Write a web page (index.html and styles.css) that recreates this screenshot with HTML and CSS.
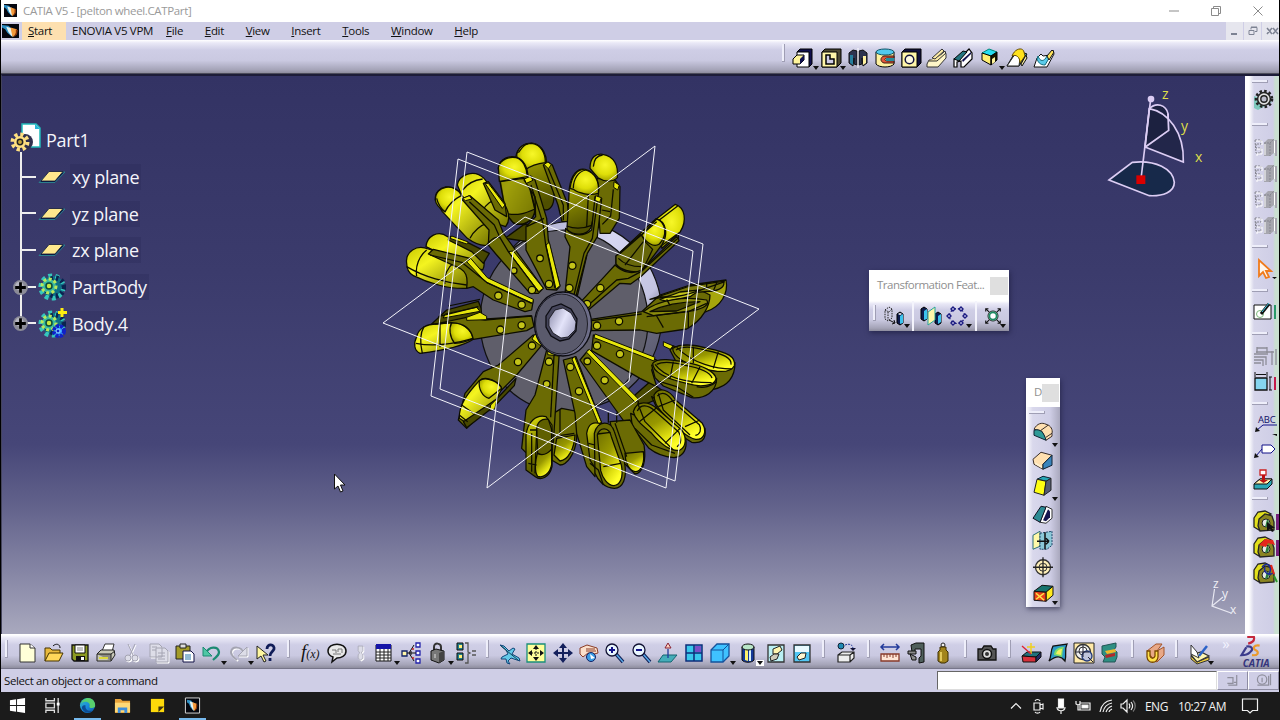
FILE: index.html
```html
<!DOCTYPE html>
<html lang="en">
<head>
<meta charset="UTF-8">
<meta name="viewport" content="width=device-width,initial-scale=1.0">
<title>CATIA V5 - [pelton wheel.CATPart]</title>
<link rel="stylesheet" href="styles.css">
</head>
<body>

<!-- ===== Shared shapes ===== -->
<svg class="defs" width="0" height="0">
  <defs>
    <linearGradient id="gold" x1="0" y1="0" x2="1" y2="1">
      <stop offset="0" stop-color="#c9c900"/><stop offset=".35" stop-color="#f4f420"/><stop offset="1" stop-color="#747400"/>
    </linearGradient>
    <linearGradient id="goldDown" x1="0" y1="0" x2=".2" y2="1">
      <stop offset="0" stop-color="#e4e410"/><stop offset=".45" stop-color="#8b8b00"/><stop offset="1" stop-color="#4f4f00"/>
    </linearGradient>
    <linearGradient id="cup" x1="0" y1="0" x2=".6" y2="1">
      <stop offset="0" stop-color="#6c6c00"/><stop offset=".5" stop-color="#989800"/><stop offset=".8" stop-color="#dede10"/><stop offset="1" stop-color="#ffff28"/>
    </linearGradient>
    <radialGradient id="dome" cx=".55" cy=".4" r=".6">
      <stop offset="0" stop-color="#f7f728"/><stop offset=".6" stop-color="#dede08"/><stop offset="1" stop-color="#a2a200"/>
    </radialGradient>
    <linearGradient id="bore" x1="0" y1="0" x2="1" y2=".5">
      <stop offset="0" stop-color="#8d8dac"/><stop offset=".6" stop-color="#e4e4fa"/><stop offset="1" stop-color="#b5b5d2"/>
    </linearGradient>
    <linearGradient id="rim" x1="0" y1="0" x2="1" y2="1">
      <stop offset="0" stop-color="#9c9cc0"/><stop offset=".4" stop-color="#d6d6f2"/><stop offset=".66" stop-color="#c4c4e2"/><stop offset=".76" stop-color="#66667c"/><stop offset="1" stop-color="#4c4c60"/>
    </linearGradient>
    <linearGradient id="edge" x1="0" y1="0" x2="1" y2="1">
      <stop offset="0" stop-color="#35c1b0"/><stop offset=".5" stop-color="#1a8be0"/><stop offset="1" stop-color="#0c59a4"/>
    </linearGradient>
    <symbol id="catia" viewBox="0 0 16 16" preserveAspectRatio="none">
      <path fill="#05070f" d="M0 0h16v16H0z"/>
      <path fill="#2d8fc4" d="M0 1l6 1 5 5-1 8-5-5-2-4-3-2z"/>
      <path fill="#e8f3ef" d="M4 3l6 2 1 6-2 3-3-5z"/>
      <path fill="#f39a3c" d="M8 4l6 2 0 5-4 4-1-5z"/>
      <path fill="#8a3408" d="M13 6l2 1-1 5-3 3 2-5z"/>
    </symbol>
    <symbol id="gear" viewBox="0 0 22 22">
      <circle cx="11" cy="11" r="8" fill="none" stroke="#222" stroke-width="2.600" stroke-dasharray="2.500 2.200"/>
      <circle cx="11" cy="11" r="6.400" fill="#e2e2e2" stroke="#222" stroke-width="1.500"/>
      <circle cx="11" cy="11" r="3.200" fill="#bdbdcc" stroke="#222" stroke-width="1.400"/>
    </symbol>
    <symbol id="body" viewBox="0 0 28 28">
      <circle cx="15" cy="14" r="11" fill="#0f6f86"/>
      <circle cx="14" cy="14" r="11.400" fill="none" stroke="#35c7bd" stroke-width="4.400" stroke-dasharray="3.800 3.300"/>
      <circle cx="17" cy="14" r="9" fill="none" stroke="#0b2450" stroke-width="5" stroke-dasharray="2.400 3"/>
      <circle cx="11" cy="13" r="7" fill="#37b9a0" stroke="#b9e85a" stroke-width="3" stroke-dasharray="3 2.400"/>
      <circle cx="11" cy="13" r="3" fill="#c5e840" stroke="#0c4b3b" stroke-width="1.500"/>
    </symbol>
    <symbol id="ghost" viewBox="0 0 24 22">
      <path fill="#a6a6ae" d="M11 7l4-4h6v14l-4 3h-6zM22 4h3v16h-3z"/>
      <path fill="none" stroke="#85858f" stroke-dasharray="2 1" d="M2 4h6v4H3v4h5v5H3zM11 7h6v13M17 7l4-4"/>
      <path fill="none" stroke="#fff" d="M3 5h6v4M4 13h5v5H4v2M12 8v11M21.500 5v12"/>
    </symbol>
    <symbol id="nut" viewBox="0 0 24 22">
      <path fill="#e2df1c" stroke="#222" stroke-width="1.300" d="M1 8l4-6 7-1 6 3-8 4-4 12-5-3z"/>
      <path fill="#8a8422" stroke="#222" stroke-width="1.300" d="M6 9l6-5 7 2 2 6v8l-14 1-2-5z"/>
      <circle cx="13" cy="13" r="4" fill="#e5ebe5" stroke="#222"/>
      <path fill="#2b7c3b" d="M14 9.500a4 4 0 0 1-2 7.400z"/>
    </symbol>
    <symbol id="plane" viewBox="0 0 28 14">
      <path fill="#0b1f4a" stroke="#2b7d8d" d="M1 12.500h16L27 2l-16 .5z"/>
      <path fill="#ffe88d" stroke="#0e1538" stroke-width=".8" d="M3 11L11 1.500h14L17 11z"/>
    </symbol>
    <symbol id="plus" viewBox="0 0 16 16">
      <circle cx="8" cy="8" r="7" fill="#8b8b97"/><circle cx="7" cy="6.500" r="4" fill="#b4b4c0"/>
      <path stroke="#000" stroke-width="2.600" d="M8 3v10M3 8h10"/>
    </symbol>
  </defs>
</svg>

<div class="app">

  <!-- ===== Title bar ===== -->
  <header class="titlebar">
    <svg class="logo"><use href="#catia"/></svg>
    <span class="title">CATIA V5 - [pelton wheel.CATPart]</span>
    <div class="win-btns">
      <svg viewBox="0 0 12 12"><path d="M1 6h10"/></svg>
      <svg viewBox="0 0 12 12"><path d="M1.500 3.500h7v7h-7zM3.500 3.500v-2h7v7h-2"/></svg>
      <svg viewBox="0 0 12 12"><path d="M1.500 1.500l9 9M10.500 1.500l-9 9"/></svg>
    </div>
  </header>

  <!-- ===== Menu ===== -->
  <nav class="menubar">
    <svg class="logo"><use href="#catia"/></svg>
    <span class="item start"><u>S</u>tart</span>
    <span class="item enovia">ENOVIA V5 VPM</span>
    <span class="item"><u>F</u>ile</span>
    <span class="item"><u>E</u>dit</span>
    <span class="item"><u>V</u>iew</span>
    <span class="item"><u>I</u>nsert</span>
    <span class="item"><u>T</u>ools</span>
    <span class="item"><u>W</u>indow</span>
    <span class="item"><u>H</u>elp</span>
    <div class="mdi">
      <svg viewBox="0 0 17 18"><path stroke-width="2" d="M5 12h6"/></svg>
      <svg viewBox="0 0 17 18"><path d="M5 8.500h5v4H5zM7 7.500v-2h6v4h-2M7 5h6"/></svg>
      <svg viewBox="0 0 17 18"><path stroke-width="1.500" d="M5 6l5 6M10 6l-5 6M11 6l5 6M16 6l-5 6"/></svg>
    </div>
  </nav>

  <!-- ===== Sketch based features ===== -->
  <div class="toolbar top">
    <i class="grip"></i>
    <svg class="tool" viewBox="0 0 22 22"><path fill="#10104e" stroke="#000" d="M5 5l3-3h12v15l-3 3z"/><path fill="#fff" stroke="#000" d="M5 5h12v15H5z"/><path fill="#fff59c" stroke="#000" d="M1 12l4-4h7v5l-4 4H1z"/><path fill="#10104e" d="M8 12l4-4v5l-4 4z"/></svg><b class="drop"></b>
    <svg class="tool" viewBox="0 0 22 22"><path fill="#4d4933" stroke="#000" d="M2 5l3-3h16v14l-4 4H2z"/><path fill="#fff6a8" stroke="#000" d="M2 5h15v15H2z"/><path fill="#cfcde6" stroke="#000" stroke-width="1.500" d="M6 8h4v4h4v5H6z"/></svg><b class="drop"></b>
    <svg class="tool" viewBox="0 0 22 22"><path fill="#2d344f" stroke="#111" d="M2 6l4-3 4 1v14l-3-1v-6l-1 8-4-3z"/><path fill="#277f9c" d="M3 8h3v10l-3-2z"/><path fill="#2d344f" stroke="#111" d="M20 6l-4-3-4 1v14l3-1v-6l1 8 4-3z"/><path fill="#fff2a0" d="M16 9h3v7l-3 2z"/><path stroke="#fff" d="M11 1v20"/></svg>
    <svg class="tool" viewBox="0 0 22 22"><path fill="#fff2a0" stroke="#000" d="M2 5v12c3 4 15 4 18 0V5z"/><ellipse cx="11" cy="5" rx="9" ry="3" fill="#51c9ee" stroke="#156"/><path fill="#e2573a" stroke="#3b1a10" d="M20 9H10c-4 1-4 6 0 7h10v-2h-7c-3-1-3-2 0-3h7z"/><path fill="#258c9c" d="M12 11h8v3h-8z"/></svg>
    <svg class="tool" viewBox="0 0 22 22"><path fill="#11113f" stroke="#000" d="M2 5l3-3h16v14l-4 4H2z"/><path fill="#fff6a8" stroke="#000" d="M2 5h15v15H2z"/><circle cx="9.500" cy="12.500" r="4.300" fill="#fffbe0" stroke="#11113f" stroke-width="1.500"/></svg>
    <svg class="tool" viewBox="0 0 22 22"><path fill="#fff6c8" stroke="#333" d="M1 17l2-4h6l10-9 1 3v4l-8 9H1z"/><path fill="#fbeaa4" stroke="#333" d="M6 11l10-9 2 2-9 8zM3 14h8l9-8"/></svg>
    <svg class="tool" viewBox="0 0 22 22"><path fill="#fff" stroke="#000" stroke-width="1.200" d="M2 20v-8l6-1 9-9 3 4v6l-8 8h-3v-6l-4 1v5z"/><path fill="#24747f" stroke="#000" d="M2 12l9-8 4 1-8 9z"/><path fill="#10104e" d="M10 13l9-8v2l-8 8z"/></svg>
    <svg class="tool" viewBox="0 0 22 22"><path fill="#27dcf2" stroke="#087" d="M3 6l7-4 8 3-6 4z"/><path fill="#ffee72" stroke="#000" d="M3 6l9 3v9l-9-5z"/><path fill="#171700" stroke="#000" d="M12 9l6-4v8l-6 5z"/><path fill="#fff59c" d="M13 12l3-2v5l-3 2z"/></svg><b class="drop"></b>
    <svg class="tool" viewBox="0 0 22 22"><path fill="#2aa3ab" stroke="#111" d="M1 19L8 7l5-3 8 3-8 12z"/><path fill="#fff" stroke="#222" d="M1 19l6-9c2-3 6-3 7 1l-1 8z"/><path fill="#ffe21c" stroke="#664c00" d="M6 9c3-8 11-9 12-4l1 4-5 7c0-6-4-9-8-7z"/><path fill="#f3e9a0" stroke="#111" d="M15 17l5-9 1 3-5 8z"/></svg>
    <svg class="tool" viewBox="0 0 22 22"><path fill="#fff" stroke="#111" d="M1 20l3-9 4-4 2 2 7-1 3-5 1 4-7 13z"/><path fill="#5acbea" stroke="#126a7a" d="M5 9c2 6 6 6 9 0l4-1-6 10c-5 0-7-3-8-6z"/><path fill="#ffe35a" stroke="#111" d="M14 9l5-6 2 2-5 8z"/></svg>
  </div>

  <div class="work">
    <!-- ===== 3D viewport ===== -->
    <main class="viewport">
      <svg class="scene" viewBox="2 76 1243 558">
        <!-- disc -->
        <g stroke="#111" stroke-width="1.200">
          <ellipse cx="574" cy="315" rx="88" ry="94" fill="url(#rim)"/>
          <ellipse cx="564" cy="321" rx="84" ry="91" fill="#5f5e6a"/>
        </g>

        <!-- buckets, upper left -->
        <g class="part" transform="translate(370 130) scale(.33333)">
          <path class="d" d="M405 325l55-40 30-5 20 60z"/>
          <path fill="url(#goldDown)" d="M437 85C440 50 465 38 490 40c30 5 40 40 40 60l22 85c2 30-5 55-25 55l-30-5z"/>
          <path fill="url(#dome)" d="M440 75c5-25 25-35 45-35 30 3 42 35 41 58-20 2-45 10-60 22-15-8-25-25-26-45z"/>
          <path class="a" d="M520 105l15-8 12 8 45 115 8 55h-24l-12-50z"/><path class="y" d="M522 103l12-7 10 8-9 12z"/>
          <path class="n" d="M535 116l45 110v45M445 68c15-20 15-22 30-27"/>
          <path fill="url(#gold)" d="M385 115c5-33 35-38 55-33 25 8 33 35 35 63l20 95c-4 40-45 50-65 38l-22-26z"/>
          <path fill="#727200" fill-opacity=".65" d="M390 155c30-5 60-10 82-10l23 95c-4 40-45 50-65 38l-22-26z"/>
          <path fill="url(#dome)" d="M385 112c6-25 35-33 53-29 20 5 32 28 34 57-30 5-55 10-84 14z"/>
          <path fill="#555500" d="M407 250c35 8 60 0 88-13-2 40-42 53-65 41z"/>
          <path class="a" d="M462 150l20-12 13 12 35 115 5 65 35 138-10 12-30-2-62-118 0-70 29-30-2-60z"/>
          <path class="y" d="M528 345l10-8 32 130-12 10z"/><path class="y" d="M463 147l18-8 8 12-20 9z"/>
          <path class="n" d="M483 165l36 115 8 65 28 130M470 290l52-25"/>

          <path fill="url(#gold)" d="M262 165c5-30 50-50 80-20l60 75c15 25 20 50 5 70l-60-20-70-70z"/>
          <path class="n" d="M278 180c15-20 35-30 60-33M340 240c5-15 25-30 45-35"/>
          <path class="a" d="M340 160l15-5 50 65 5 40-35-20z"/><path class="y" d="M345 160l10 0 50 65-8 10z"/>
          <path fill="url(#gold)" d="M196 210c-3-45 60-55 80-12l70 65c20 30 22 65 8 82-20 5-48-10-62-20l-75-80z"/>
          <path fill="url(#dome)" d="M196 210c0-45 58-52 79-14-20 10-40 28-50 50-15-10-28-20-29-36z"/>
          <path class="n" d="M300 325c10-20 28-38 57-48M200 205c5 20 12 30 25 40"/>
          <path class="a" d="M275 207l25-10 85 73 15 40 120 165-15 15-25 0-100-115-25-30 2-45z"/>
          <path class="y" d="M415 365l15-2 90 112-14 10z"/><path class="y" d="M278 205l20-8 8 10-20 5z"/>
          <path class="n" d="M298 215l75 70 17 38 25 42 90 120M350 345c15-20 25-25 40-22"/>

          <path fill="url(#gold)" d="M168 350c2-30 35-52 65-30l90 40c18 15 25 40 15 60l-108-40z"/>
          <path class="d" d="M238 318l60 22 60 30-18 30-35-35-70-35z"/><path class="y" d="M245 318l50 18-5 6-50-17z"/>
          <path fill="url(#gold)" d="M110 400c-5-35 30-58 65-43l85 28c30 15 38 60 30 90-50 3-115-15-160-38-15-8-20-22-20-37z"/>
          <path class="n" d="M140 438c-5-30 8-60 30-78M225 462c-5-25 8-50 28-65M110 410c50 30 120 50 180 55"/>
          <path class="a" d="M175 372l15-14 110 27 50 60 140 65-5 30-20 5-95-35-60-40-20 5c5-40-5-50-20-60z"/>
          <path class="y" d="M290 395l12-10 50 58 138 65-2 12-140-63z"/><path class="n" d="M180 375l95 22 75 60 135 63"/>
          <g class="hole"><circle cx="510" cy="385" r="10"/><circle cx="537" cy="462" r="11"/><circle cx="432" cy="422" r="9"/><circle cx="486" cy="480" r="11"/><circle cx="385" cy="497" r="11"/><circle cx="455" cy="524" r="11"/></g>
        </g>

        <!-- upper right -->
        <g class="part" transform="translate(560 130) scale(.33333)">
          <path class="a" d="M110 145l55 5 15 20-2 95-28 45-30 0z"/><path class="y" d="M162 155l16 10-5 15-12-8z"/>
          <path fill="url(#dome)" d="M90 115c0-35 20-45 38-42 35 5 48 35 44 70-15 15-40 12-58 0z"/><path class="n" d="M100 110c2-25 15-34 28-35M160 178l-8 80-25 25M125 240l25 5"/>
          <path fill="url(#goldDown)" d="M28 175c5-40 25-62 47-57 35 8 45 45 40 75l-22 100c-15 28-55 22-72 5z"/>
          <path fill="url(#dome)" d="M30 175c5-38 25-62 47-55 28 8 42 35 38 70-25 8-60 0-75-12z"/><path class="n" d="M40 175c0-30 15-50 37-55M20 288c25 10 50 8 75-2M85 195l-5 95"/>
          <path class="a" d="M105 200l20 5-13 115-30 50-30 128-37-8 15-140-15-30 2-25c20 25 55 25 78 5z"/><path class="y" d="M107 197l17 6-5 14-14-6z"/><path class="n" d="M112 215l-15 110-25 45-30 125M80 375L48 498"/>

          <path fill="url(#dome)" d="M288 268l58-45c30 10 35 50 15 82l-55 50z"/><path class="n" d="M298 270l55-42M300 350l55-40 0 22"/>
          <path fill="url(#goldDown)" d="M168 378l120-112c30 8 38 45 18 78l-60 80c-35 5-65-5-78-22z"/>
          <path fill="#66660a" d="M168 378l75-65 15 25 20 20-32 66c-35 5-65-5-78-22z"/>
          <path fill="url(#dome)" d="M245 315l45-48c30 12 32 50 8 75-18 12-40-5-53-27z"/><path class="n" d="M175 375l75-65 40-35M175 385c20 20 45 25 70 25M250 335l-55 70"/>
          <path class="a" d="M165 405c25 25 55 28 80 15l105-100 7 12-115 108-30 22-32-2-95 80-27-20 75-80z"/><path class="n" d="M78 532l92-82 35-5 38-20 108-98"/>
          <g class="hole"><circle cx="37" cy="407" r="11"/><circle cx="28" cy="474" r="11"/><circle cx="121" cy="474" r="11"/><circle cx="81" cy="522" r="11"/></g>
        </g>

        <!-- lower left -->
        <g class="part" transform="translate(370 310) scale(.33333)">
          <path class="d" d="M185 42l45-42 95-26 8 20 3 30-90 20z"/><path class="y" d="M225 12l95-20 10 12-110 20z"/><path class="n" d="M205 20l120-30M235-12l95-20"/>
          <path fill="url(#gold)" d="M140 80c5-25 30-38 60-38l45-4c35 0 60 20 65 50-30 20-100 35-160 42-18-8-20-30-10-50z"/>
          <path fill="url(#dome)" d="M245 38c35 0 58 20 64 47-15 8-35 14-55 15-15-18-18-45-9-62z"/>
          <path class="n" d="M162 50c-12 20-12 50-5 80M138 100c60 12 130-3 172-15M210 42v70"/>
          <path class="a" d="M195 42l95-20 55 8 140-12 7 32-22 12-160 26c-5-28-25-48-65-50z"/><path class="y" d="M290 22l40-15 20 12 0 10-60 2z"/><path class="n" d="M350 27l135-10"/>
          <path class="a" d="M490 75l32 23-82 97-65 65-30 40-55 55-25-25 20-80 55-65 45-20z"/><path class="y" d="M495 72l28 24-10 12-27-21z"/>
          <path fill="url(#gold)" d="M328 212c20-18 62 5 67 25l-15 30-90 72-22-14c-2-40 25-75 60-113z"/><path fill="url(#dome)" d="M328 212c20-15 60 5 67 23l-38 30c-20-5-32-28-29-53z"/>
          <path class="d" d="M280 335l100-68 58-62-5 22-58 60-85 66z"/><path class="y" d="M362 285l20-20-8 32-15 5z"/><path class="n" d="M268 315l25 20M275 285l35 25"/>

          <path class="a" d="M550 310l25-15 50 10-5 80c-5 50-30 80-50 80l-25-15z"/><path fill="url(#cup)" d="M560 385l55-10c-2 40-20 75-45 78l-18-18z"/><path class="n" d="M570 300v70M548 380l65-10"/>
          <path class="a" d="M530 120l38 5-13 195-5 80-80 30-15-15 13-115 27-45z"/><path class="y" d="M534 120l32 4-1 14-32-4z"/><path class="n" d="M552 137l-10 185"/>
          <path fill="url(#goldDown)" d="M468 375c5-40 30-62 60-55l18 25v125c-8 35-35 42-50 30l-28-20z"/>
          <path fill="#5f5f00" d="M500 360c0-25 15-35 35-32l10 30v60c-15 20-30 20-42 12z"/><path fill="url(#cup)" d="M502 430c15 8 30 2 43-12l0 45c-5 28-25 42-42 36-10-12-8-45-1-69z"/>
          <path class="n" d="M485 370v115M500 360l-5 130M475 460l25 5M480 360h20"/>
          <g class="hole"><circle cx="391" cy="59" r="11"/><circle cx="455" cy="46" r="11"/><circle cx="486" cy="107" r="11"/><circle cx="444" cy="156" r="11"/><circle cx="537" cy="155" r="11"/><circle cx="530" cy="222" r="10"/></g>
        </g>

        <!-- lower right -->
        <g class="part" transform="translate(560 310) scale(.33333)">
          <path fill="#a6a60c" d="M390-75l108-15c8 40-15 80-60 95l-100 30z"/>
          <path class="a" d="M92 28L245 5l55-50 90-30 60 30c0 30-20 75-70 102L290 70l-50-10L95 62z"/>
          <path fill="#77770a" d="M270-32l120-40 100-14c6 12-4 24-30 29l-60 5-80 12z"/><path fill="#c4c41a" d="M300-32l60-22 60-6-30 20-70 14z"/><path fill="#8a8a0c" d="M250 5c50-40 130-45 190-35 10 15-10 25-40 32l-120 15z"/><path class="d" d="M270 5c50-25 110-30 150-30l-70 28z"/>
          <path class="n" d="M260 20l125-15 55-25M300-40c60 10 130-25 195-45M385 5v50M320-32l10 18M95 32l150-20M290 18l20 35M440-82v20M470-82l-10 25"/>

          <path class="d" d="M225 255l45-40 35 25-20 30-45 20z"/>
          <path class="a" d="M100 75l190 75-15 30 15 50-50-25L95 122z"/><path class="y" d="M105 72l180 70-3 11-180-70z"/><path class="y" d="M310 95l35 15-5 12-30-14z"/>
          <path class="a" d="M330 120l10-12 185 50c0 40-20 70-65 80l-100-60z"/>
          <path fill="url(#cup)" d="M338 115c25-15 70-10 105 0 60 12 85 25 80 52-10 20-45 22-95 8-50-12-90-35-90-60z"/><path class="n" d="M350 112c50 50 120 65 165 65M400 110v50M475 125l-15 50M348 120c20-14 60-8 93 2 50 10 75 22 72 42"/>
          <path class="a" d="M275 165l195 40c0 40-35 62-75 58l-85-35-25-25z"/>
          <path fill="url(#cup)" d="M278 160c15-18 60-10 100-3 50 8 90 30 90 50-5 22-50 25-85 14-55-12-105-30-105-61z"/><path class="n" d="M285 163c30 40 90 55 170 55M340 155l-10 50M420 170l-25 50M300 215l50 15 50 32M470 215c-15 15-40 20-60 15M290 163c20-10 55-5 86 3 45 8 75 22 80 38"/>

          <path class="a" d="M85 120l150 155-15 70-20 0L60 150z"/><path class="y" d="M88 118l148 150-9 10L79 126z"/>
          <path class="a" d="M275 260l160 95c5 40-15 45-40 42l-80-50z"/>
          <path fill="url(#cup)" d="M282 255c15-25 45-18 65 15l80 70c15 25 5 50-20 48-30-5-70-50-100-80-15-15-25-35-25-53z"/><path class="n" d="M295 290l50-20M375 350l45-20M295 250l15 50 80 75M292 258c15-15 32-8 48 18l78 68c8 15 2 30-12 32"/>
          <path class="a" d="M212 310l165 75c5 30-5 55-35 58-30-2-55-12-75-28l-50-65z"/>
          <path fill="url(#cup)" d="M220 305c10-35 45-32 70-10l75 65c15 20 15 50-5 60-25 5-55-15-85-50-25-22-50-40-55-65z"/><path class="n" d="M235 285l20 50 85 85M238 335l50-40M315 400l45-45M225 355l50 50 70 25M232 303c10-22 32-18 52-1l72 64c10 16 8 36-5 44"/>

          <path class="a" d="M150 335l60-5 42 75c8 50-5 85-27 87l-50-50z"/><path fill="url(#cup)" d="M195 430l55-5c5 30-5 60-25 60-20-5-30-30-30-55z"/><path class="n" d="M165 340l35 100M145 308v30M170 308v30"/>
          <path class="a" d="M10 150l38-10 77 200-15 60-5 100-25-30-30-100-5-60z"/><path class="y" d="M44 140l80 196-8 8L36 147z"/>
          <path fill="url(#goldDown)" d="M80 370c5-30 20-35 40-30l-5 150-25-40z"/>
          <path class="a" d="M103 370c10-40 50-40 60-5l30 90c10 50-5 80-30 80-30 0-50-25-58-45z"/>
          <path fill="url(#cup)" d="M112 375c8-25 35-25 42 5l30 85c8 40-5 60-22 62-20 0-35-25-40-45z"/><path class="n" d="M112 372l40-5M130 470l52-10M85 400l20 5M90 460l25 20 15 45"/>
          <g class="hole"><circle cx="111" cy="47" r="11"/><circle cx="177" cy="34" r="11"/><circle cx="111" cy="107" r="11"/><circle cx="180" cy="132" r="11"/><circle cx="82" cy="154" r="10"/><circle cx="134" cy="211" r="11"/><circle cx="31" cy="171" r="11"/><circle cx="57" cy="244" r="11"/></g>
        </g>

        <!-- hub -->
        <g stroke="#0c0c12" stroke-width="1.300">
          <ellipse cx="563" cy="324" rx="28.500" ry="32" fill="#6e6e88"/>
          <ellipse cx="561.500" cy="324" rx="26" ry="30" fill="#5a5a6c" stroke-width=".8"/>
          <path fill="#45455a" d="M546 316l6-9 9-3 10 5 6 10-1 12-7 8-9 2-9-5-5-9z"/>
          <path fill="url(#bore)" stroke-width=".8" d="M549 319l6-9 8-2 8 5 5 9-1 8-7 7-7 1-8-5-4-7z"/>
        </g>

        <!-- reference planes -->
        <g class="wire">
          <path d="M467 152L703 244 675 481 440 389z"/>
          <path d="M458 159L693 251 666 488 431 396z"/>
          <path d="M383 323L525 217 759 309 617 415z"/>
          <path d="M655 146L513 252 487 488 629 381z"/>
        </g>

        <!-- compass -->
        <g transform="translate(1090 76) scale(.33333)" stroke="#dccdf4" stroke-width="5" fill="#1c2140">
          <path d="M178 98c20-20 50-12 56 15l2 50-70 50z"/>
          <path fill-opacity=".75" d="M178 98c55 10 105 70 102 160l-115-45z"/>
          <path fill="none" d="M234 113l2 50-70 50"/>
          <path fill="#17294a" d="M57 312l70-53c70-8 122 20 126 60 0 30-35 42-75 40z"/>
          <path d="M182 70l-28 230"/><circle cx="183" cy="69" r="10" fill="#dccdf4" stroke="none"/>
          <path fill="#d90000" stroke="none" d="M139 298h27v26h-27z"/>
        </g>
        <g class="compass-text"><text x="1162" y="99">z</text><text x="1181" y="131">y</text><text x="1195" y="162">x</text></g>

        <!-- axis system -->
        <g fill="none" stroke="#e8e8f2" stroke-width="1.200"><path d="M1214.500 589l-2.500 17 19 7M1212 606l11-9"/></g>
        <g class="axis-text"><text x="1213" y="588">z</text><text x="1222" y="598">y</text><text x="1230" y="614">x</text></g>

        <path fill="#fff" stroke="#111" d="M334.500 474v15l3.500-3 2.500 6 2.500-1-2.500-6h4.500z"/>
      </svg>

      <!-- Specification tree -->
      <ul class="tree">
        <li class="root"><svg viewBox="0 0 32 32"><path fill="#fff" stroke="#2bb" stroke-width="1.500" d="M12 2h14l4 4v19H12z"/><path fill="#28b6d8" d="M25 2l5 5h-5z"/><circle cx="15" cy="20" r="8" fill="#30304e"/><circle cx="10" cy="20" r="7.500" fill="none" stroke="#ffe080" stroke-width="4" stroke-dasharray="3.200 2.700"/><circle cx="10" cy="20" r="6" fill="#ffe080"/><circle cx="10" cy="20" r="2.700" fill="#c9a93c" stroke="#222" stroke-width="1.500"/></svg><span>Part1</span></li>
        <li><svg class="pl"><use href="#plane"/></svg><span>xy plane</span></li>
        <li><svg class="pl"><use href="#plane"/></svg><span>yz plane</span></li>
        <li><svg class="pl"><use href="#plane"/></svg><span>zx plane</span></li>
        <li class="node"><svg class="pm"><use href="#plus"/></svg><svg class="bd"><use href="#body"/></svg><span>PartBody</span></li>
        <li class="node"><svg class="pm"><use href="#plus"/></svg><svg class="bd" viewBox="0 0 28 28"><use href="#body"/><path stroke="#ffee10" stroke-width="3" d="M24-2v9M20 2.500h9"/><circle cx="21" cy="21" r="5" fill="#3aa4ff" stroke="#1020c8" stroke-width="4" stroke-dasharray="3 1"/><circle cx="20" cy="21" r="2" fill="#1020c8" stroke="#8fe0ff"/></svg><span>Body.4</span></li>
      </ul>

      <!-- Floating toolbars -->
      <div class="float trans">
        <div class="float-title"><span>Transformation Feat...</span><i></i></div>
        <div class="float-body">
          <i class="grip"></i>
          <svg class="tool" viewBox="0 0 22 22"><path fill="none" stroke="#222" stroke-dasharray="1.500 1" d="M2 5l4-3 3 2v9l-4 3-3-2zM2 5l4 2 3-3M5 7v8"/><path stroke="#111" d="M6 15l6 3M12 18l-3 1M12 18l-1-3"/><path fill="#0d1b4d" stroke="#000" d="M14 9l3-2 3 2v9l-3 2-3-2z"/><path fill="#3cc3ee" d="M17 11l3-2v9l-3 1z"/><path fill="#fff" d="M15 9l2-1 2 1-2 1z"/></svg><b class="drop"></b>
          <i class="sep"></i>
          <svg class="tool" viewBox="0 0 22 22"><path fill="#0d1b4d" stroke="#000" d="M1 4l3-2 3 2v10l-3 2-3-2zM15 9l3-2 3 2v9l-3 2-3-2z"/><path fill="#fff7a8" stroke="#27a39a" d="M8 7l7-5v13l-7 5z"/><path fill="#3cc3ee" d="M4 6l3-2v10l-3 1zM18 11l3-2v8l-3 2z"/></svg>
          <svg class="tool" viewBox="0 0 22 22"><g fill="none" stroke="#1b1b80" stroke-width="1.200"><circle cx="11" cy="11" r="7.500" stroke-dasharray="2 2"/><g fill="#e9e8ff" stroke-width="1.400"><path d="M7 2l2 2-2 2-2-2zM15 2l2 2-2 2-2-2zM3 9l2 2-2 2-2-2zM19 9l2 2-2 2-2-2zM7 16l2 2-2 2-2-2zM15 16l2 2-2 2-2-2z"/></g></g></svg><b class="drop"></b>
          <i class="sep"></i>
          <svg class="tool last" viewBox="0 0 22 22"><path stroke="#111" stroke-width="1.200" fill="none" d="M3 3l16 16M19 3L3 19M3 6V3h3M16 3h3v3M19 16v3h-3M6 19H3v-3"/><circle cx="11" cy="11" r="5.500" fill="#eaffea" stroke="#111"/><circle cx="11" cy="11" r="4" fill="#fff" stroke="#1d8a64" stroke-width="2"/></svg><b class="drop"></b>
        </div>
      </div>

      <div class="float dress">
        <div class="float-title"><span>D</span><i></i></div>
        <div class="float-body col">
          <i class="grip"></i>
          <svg class="tool" viewBox="0 0 22 22"><path fill="#ffe0b0" stroke="#3a2f2a" d="M2 8c3-6 8-7 12-5 5 1 7 6 6 9v3l-6 4-4-9z"/><path fill="#2f9a97" stroke="#123" d="M2 9c6-2 10 2 12 10L2 14z"/><path stroke="#3a2f2a" d="M9 9l7-5M14 16l6-4"/></svg><b class="drop"></b>
          <svg class="tool" viewBox="0 0 22 22"><path fill="#ffe0b0" stroke="#3a2f2a" d="M1 10l8-7 11 3-9 9v5l-9-5z"/><path fill="#3a84bb" stroke="#123" d="M11 20v-5l9-9v10z"/><path fill="#fff0d0" d="M3 13l7 4v2l-7-4z"/></svg>
          <svg class="tool" viewBox="0 0 22 22"><path fill="#27a6b4" stroke="#123" d="M5 4l6-3 8 2-4 3z"/><path fill="#ffff12" stroke="#222" d="M5 4l9 2-2 14-10-3z"/><path fill="#545c70" stroke="#222" d="M14 6l5-3v12l-7 5z"/></svg><b class="drop"></b>
          <svg class="tool" viewBox="0 0 22 22"><path fill="#fff" stroke="#333" d="M8 19l6-16 6 3v9l-6 5z"/><path fill="#14144f" d="M11 17l5-11 2 2v6l-4 4z"/><path fill="#2c8b94" stroke="#112" d="M1 15l8-12 5 1-6 15z"/></svg>
          <svg class="tool" viewBox="0 0 22 22"><path fill="#fff8a8" stroke="#2b6e7a" d="M1 6l7-4v15l-7 3z"/><path fill="#8cc9d8" stroke="#1d4568" stroke-dasharray="2 1" d="M8 4l12-2v14l-5 4H8z"/><path stroke="#111" stroke-width="1.500" d="M5 12h12M17 12l-3-3M17 12l-3 3M13 3v17"/></svg>
          <svg class="tool" viewBox="0 0 22 22"><circle cx="11" cy="11" r="7.500" fill="#ffefb8" stroke="#333" stroke-width="1.300"/><path fill="none" stroke="#222" stroke-width="1.300" d="M11 1v20M1 11h20"/><circle cx="11" cy="11" r="4" fill="none" stroke="#333"/></svg>
          <svg class="tool end" viewBox="0 0 22 22"><path fill="#17736e" stroke="#111" d="M2 9l8-6 11 1-7 6z"/><path fill="#ffea20" stroke="#111" d="M14 10l7-6v9l-7 6z"/><path fill="#e8431c" stroke="#111" d="M2 9l12 1v9L2 18z"/><path stroke="#ffe84a" stroke-width="1.500" d="M4 11l8 7M12 11l-8 6"/></svg><b class="drop"></b>
        </div>
      </div>
    </main>

    <!-- ===== Right toolbar ===== -->
    <aside class="sidebar">
      <i class="grip"></i>
      <svg class="tool wide" viewBox="0 0 24 22"><path fill="#7ec8bd" d="M1 8l18 6-14 8-4-2z"/><use href="#gear" width="22" height="22"/></svg>
      <i class="grip"></i>
      <svg class="tool"><use href="#ghost"/></svg>
      <svg class="tool"><use href="#ghost"/></svg>
      <svg class="tool"><use href="#ghost"/></svg>
      <svg class="tool"><use href="#ghost"/></svg>
      <i class="grip"></i>
      <svg class="tool" viewBox="0 0 24 22"><path fill="#fff7ec" stroke="#f07a1a" stroke-width="1.800" d="M6 2v16l4-4 3 6 3-1-3-6h5z"/><path fill="#111" d="M19 19h5l-2.500 2z"/></svg>
      <i class="grip"></i>
      <svg class="tool" viewBox="0 0 24 22"><path fill="#fff" stroke="#111" d="M1 4h17v14H1z"/><circle cx="7" cy="13" r="3.500" fill="none" stroke="#7ab77a"/><path stroke="#111" stroke-width="3" d="M8 13l8-10"/><path stroke="#3fc4de" d="M9 11l7-9"/><path stroke="#2a9a6a" stroke-width="2" d="M22 4v14"/></svg>
      <i class="grip"></i>
      <svg class="tool" viewBox="0 0 24 22"><path fill="none" stroke="#8d8d98" stroke-width="1.300" d="M3 7h18M1 9h14M1 12h12v8M1 15h9v6M1 18h7M4 2v6M14 2v6M4 3h10M19 6v14M23 4v16"/></svg>
      <svg class="tool" viewBox="0 0 24 22"><path fill="#86d5f0" stroke="#111" stroke-width="1.300" d="M2 7h12v12H2z"/><path stroke="#111" d="M2 1v5M14 1v5M3 3.500h10M17 6v13M16 6h3M16 19h3"/><path stroke="#c41b4b" stroke-width="2" d="M22 6v13"/></svg>
      <i class="grip"></i>
      <svg class="tool note-t" viewBox="0 0 24 22"><text class="abc" x="5" y="11">ABC</text><path stroke="#118" fill="none" d="M24 13H10l-6 5"/><path fill="#111" d="M2 20l1-5 4 4zM19 22h5v2z"/></svg>
      <svg class="tool lower" viewBox="0 0 24 22"><path fill="#fff" stroke="#118" d="M9 6h9l4 4-4 4H9z"/><path stroke="#118" d="M9 10l-6 7"/><path fill="#111" d="M1 19l1-5 4 4z"/></svg>
      <svg class="tool lower stamp" viewBox="0 0 24 22"><path fill="#fff" stroke="#c22" stroke-width="1.300" d="M7 1h6v5H7z"/><path fill="#2da7b5" stroke="#111" d="M1 15l6-5h12v5l-5 5H1z"/><path fill="#fff0b0" stroke="#111" d="M1 15l6-5h12l-5 5z"/><path fill="#b11" d="M9 6h3v5h3l-4.500 3L6 11h3z"/></svg>
      <i class="grip"></i>
      <svg class="tool" viewBox="0 0 24 22"><use href="#nut" width="24" height="22"/><path fill="#111" d="M14 12v9l3-2 2 3 2-1-2-3h3z"/><path fill="#74207a" d="M23 4h3v16h-3z"/></svg>
      <svg class="tool" viewBox="0 0 24 22"><use href="#nut" width="24" height="22"/><path fill="#e5261c" d="M6 9l6-6 8 1 2 5-7-2-2 4z"/><path fill="#74207a" d="M23 4h3v16h-3z"/></svg>
      <svg class="tool" viewBox="0 0 24 22"><use href="#nut" width="24" height="22"/><path fill="none" stroke="#1b2b9a" stroke-width="1.500" d="M9 5c5-6 11 0 7 7M12 5c-2 6 4 9 8 6"/><path stroke="#e5261c" stroke-width="2" d="M18 3l3 9"/><path stroke="#2b9a2b" stroke-width="2" d="M21 14l3 6"/></svg>
    </aside>
  </div>

  <!-- ===== Standard toolbar ===== -->
  <div class="toolbar bottom">
    <i class="grip"></i>
    <svg class="tool" viewBox="0 0 22 22"><path fill="#ffffd8" stroke="#333" d="M4 2h10l5 4v14H4z"/><path fill="#fff" stroke="#333" d="M14 2v4h5"/></svg>
    <svg class="tool" viewBox="0 0 22 22"><path fill="#e9b93c" stroke="#443300" d="M3 19V6h5l2 2h8v3"/><path fill="#ffd75a" stroke="#443300" d="M3 19l4-8h14l-4 8z"/><path fill="none" stroke="#111" d="M11 4c3-3 7-2 7 2"/></svg>
    <svg class="tool" viewBox="0 0 22 22"><path fill="#8c9a23" stroke="#111" stroke-width="1.300" d="M3 3h16v16H5l-2-2z"/><path fill="#fff" stroke="#111" d="M6 3h10v8H6z"/><path fill="#111" d="M7 14h9v5H7z"/><path fill="#fff" d="M12 15h3v3h-3z"/><path stroke="#888" d="M8 6h6M8 8h6"/></svg>
    <svg class="tool" viewBox="0 0 22 22"><path fill="#fff" stroke="#333" d="M7 9l3-7h9l-2 8z"/><path fill="#c9c9b8" stroke="#222" d="M2 12l4-4h13l1 5-4 6H2z"/><path fill="#8b8b80" stroke="#222" d="M2 12h14v7M16 12l4-3"/><path stroke="#dcd83a" stroke-width="2" d="M4 16h9"/></svg>
    <svg class="tool ghost" viewBox="0 0 22 22"><path d="M7 2l5 11M14 2L9 13"/><circle cx="7" cy="16" r="3"/><circle cx="14" cy="16" r="3"/></svg>
    <svg class="tool ghost" viewBox="0 0 22 22"><path d="M2 2h9l3 3v10H2zM8 6h9l3 3v11H8zM4 5h5M4 8h4M10 11h7M10 14h7M10 17h7"/></svg>
    <svg class="tool" viewBox="0 0 22 22"><path fill="#a39b28" stroke="#222" d="M2 4h14v13H2z"/><path fill="#ddd" stroke="#222" d="M6 2h6v4H6z"/><path fill="#fff" stroke="#114" d="M9 9h8l3 3v8H9z"/><path stroke="#27a" d="M11 13h6M11 15h6M11 17h6"/></svg>
    <svg class="tool" viewBox="0 0 22 22"><path fill="none" stroke="#1c8a72" stroke-width="2.200" d="M6 11c3-7 12-7 13-1 0 4-3 5-6 8"/><path fill="#4fc7a5" stroke="#1c8a72" d="M3 5v9h9z"/></svg><b class="drop"></b>
    <svg class="tool ghost" viewBox="0 0 22 22"><path fill="none" stroke-width="2" d="M16 11C13 4 4 4 3 10c0 4 3 5 6 8"/><path d="M19 5v9h-9z"/></svg><b class="drop"></b>
    <svg class="tool" viewBox="0 0 22 22"><path fill="#fff7a0" stroke="#222" d="M2 4v13l4-3 3 6 2-1-3-6h5z"/><path fill="none" stroke="#101c58" stroke-width="2.800" d="M12 7c0-6 8-5 7 0-1 3-4 3-4 7M15 16v3"/></svg>
    <i class="grip"></i>
    <svg class="tool" viewBox="0 0 22 22"><text class="fx" x="1" y="16">f<tspan font-size="12">(x)</tspan></text></svg>
    <svg class="tool" viewBox="0 0 22 22"><path fill="#e9e9e9" stroke="#111" stroke-width="1.500" d="M2 9c0-9 18-9 18 0 0 5-5 7-9 7l-5 4 1-5c-3-1-5-3-5-6z"/><path stroke="#777" fill="none" d="M6 8h4v3M12 10V7h4v4M7 12h8"/></svg>
    <svg class="tool ghost slim" viewBox="0 0 22 22"><path d="M8 2h6v6l-2 3 2 2v5l-3 2-3-2v-5l2-2-2-3z"/></svg>
    <svg class="tool" viewBox="0 0 22 22"><path fill="#fff" stroke="#111" d="M3 3h15v16H3z"/><path fill="#1515a8" d="M3 2h15v5H3z"/><path stroke="#222" d="M3 10h15M3 13h15M3 16h15M7 7v12M11 7v12M15 7v12"/></svg><b class="drop"></b>
    <svg class="tool" viewBox="0 0 22 22"><path fill="#fff6a8" stroke="#126" stroke-width="1.300" d="M1 9h5v5H1z"/><path fill="#fff" stroke="#22a" stroke-width="1.300" d="M15 1h4v4h-4zM15 9h4v4h-4zM15 17h4v4h-4z"/><path fill="none" stroke="#111" d="M6 11h9M13 3l-5 8 5 8M10 9v4"/><path stroke="#c22" stroke-width="1.500" d="M12 6v2M12 15v2"/></svg>
    <svg class="tool" viewBox="0 0 22 22"><path fill="none" stroke="#333" stroke-width="2" d="M7 9V5c0-5 7-4 7 0v4"/><path fill="#777" stroke="#111" d="M4 9l5-2 8 2v9l-5 3-8-3z"/><path fill="#444" d="M12 11l5-2v9l-5 3z"/><path stroke="#ddd" d="M8 12v4"/></svg><b class="drop"></b>
    <svg class="tool" viewBox="0 0 22 22"><path fill="#237d8c" stroke="#111" d="M2 1h6v7H2zM2 11h6v7H2z"/><path fill="#fff07a" d="M4 3h3v3H4zM4 13h3v3H4z"/><path fill="none" stroke="#555" stroke-width="1.300" d="M10 1h3v9l2 1-2 1v9h-3M17 9h4M17 13h4"/></svg>
    <i class="grip"></i>
    <svg class="tool" viewBox="0 0 22 22"><path fill="#63c9e8" stroke="#12457a" d="M1 3l4 1 5 5 4-3 2 1-3 5 7 4 1 3-9-3-3 3 2 3-3-1-1-4-5 0 1-2 6-3-2-4z"/><path stroke="#145" d="M2 4l17 14"/></svg>
    <svg class="tool" viewBox="0 0 22 22"><path fill="#ffff9a" stroke="#1a8f7a" stroke-width="1.300" d="M2 2h18v18H2z"/><path fill="#111" d="M11 3l3 4H8zM11 19l3-4H8zM3 11l4-3v6zM19 11l-4-3v6z"/><path stroke="#111" stroke-dasharray="2 1" d="M11 6v10M6 11h10"/></svg>
    <svg class="tool" viewBox="0 0 22 22"><path fill="#14205c" d="M11 1l4 5h-3v4h4V7l5 4-5 4v-3h-4v4h3l-4 5-4-5h3v-4H6v3l-5-4 5-4v3h4V6H7z"/></svg>
    <svg class="tool" viewBox="0 0 22 22"><path fill="#fbe0cc" stroke="#8a3d28" d="M2 12V6l7-3 10 3 1 5-4 1-6-1-5 4z"/><path stroke="#8a3d28" d="M8 7h9M8 9h10"/><circle cx="13" cy="15" r="4.500" fill="#3b9ce4" stroke="#126"/><path fill="#fff" d="M12 12l5 4-4 1z"/></svg>
    <svg class="tool" viewBox="0 0 22 22"><path stroke="#111f55" stroke-width="3.500" d="M12 12l7 8"/><path stroke="#58a9e8" stroke-width="1.500" d="M12 12l7 8"/><circle cx="8" cy="8" r="6" fill="#e9f6ff" stroke="#113" stroke-width="1.300"/><path stroke="#118" stroke-width="2" d="M5 8h6M8 5v6"/></svg>
    <svg class="tool" viewBox="0 0 22 22"><path stroke="#111f55" stroke-width="3.500" d="M12 12l7 8"/><path stroke="#58a9e8" stroke-width="1.500" d="M12 12l7 8"/><circle cx="8" cy="8" r="6" fill="#e9f6ff" stroke="#113" stroke-width="1.300"/><path stroke="#118" stroke-width="2" d="M5 8h6"/></svg>
    <svg class="tool" viewBox="0 0 22 22"><path fill="#45adb9" stroke="#146470" d="M1 20l5-7h14l-6 7z"/><path stroke="#223a9a" stroke-width="1.300" d="M11 16V7"/><path fill="#ffd2c0" stroke="#823" d="M11 1l3 5H8z"/></svg>
    <svg class="tool" viewBox="0 0 22 22"><path fill="#39c8ec" stroke="#0e2d7a" stroke-width="1.500" d="M3 3h16v16H3zM11 3v16M3 11h16"/><path fill="#7b4fc8" d="M12 4h6v6h-6z"/></svg>
    <svg class="tool" viewBox="0 0 22 22"><path fill="#3fc2ff" stroke="#15519b" stroke-width="1.300" d="M2 8l6-6h12v12l-6 6H2z"/><path fill="none" stroke="#15519b" d="M2 8h12v12M14 8l6-6"/></svg><b class="drop"></b>
    <svg class="tool" viewBox="0 0 22 22"><path fill="#143a9a" stroke="#111" d="M5 5v13c2 3 10 3 12 0V5z"/><path fill="#fff36a" d="M8 7h3v12l-3-1z"/><path fill="#d7f2f6" d="M12 7h2v12h-2z"/><ellipse cx="11" cy="5" rx="6" ry="3" fill="#b9e6c8" stroke="#111"/></svg><b class="drop lit"></b>
    <svg class="tool" viewBox="0 0 22 22"><path fill="#baf0f4" stroke="#333" stroke-width="1.300" d="M3 3h16v17H3z"/><path fill="#fff7b0" stroke="#222" d="M8 7l7-3 2 4-5 4H8z"/><path fill="#cfcdba" stroke="#222" d="M5 15l4-3h5l-2 5-6 2z"/></svg>
    <svg class="tool" viewBox="0 0 22 22"><path fill="#52c7f4" stroke="#333" stroke-width="1.300" d="M3 3h16v17H3z"/><path fill="#e9faff" d="M4 4h14v6H4z"/><path fill="#fff7d0" stroke="#222" d="M6 15l4-4h5l-1 5-6 2z"/></svg>
    <i class="grip"></i>
    <svg class="tool" viewBox="0 0 22 22"><circle cx="6" cy="4" r="3" fill="#1f8ab4" stroke="#123"/><path fill="none" stroke="#223a9a" stroke-dasharray="2 1" d="M10 3c5-2 8 0 8 4"/><path fill="#113" d="M15 6h6l-3 3z"/><path fill="#eee" stroke="#222" stroke-width="1.200" d="M3 13l4-3h12v6l-4 4H3zM3 13h12v7M15 13l4-3"/></svg>
    <i class="grip"></i>
    <svg class="tool" viewBox="0 0 22 22"><path fill="none" stroke="#223a9a" stroke-width="1.500" d="M2 5h18M5 2L2 5l3 3M17 2l3 3-3 3"/><path fill="#ffe5d5" stroke="#883a2a" stroke-width="1.300" d="M2 12h18v7H2z"/><path stroke="#883a2a" d="M5 12v3M8 12v4M11 12v3M14 12v4M17 12v3"/></svg>
    <svg class="tool" viewBox="0 0 22 22"><path fill="#4f5f5b" stroke="#111" d="M5 3l5-2h8v19l-5 1v-5l2-2V7H9v3H6z"/><path fill="#8b8b8b" stroke="#111" d="M2 9h8v3H2zM4 12l6 3v3H6z"/></svg>
    <svg class="tool" viewBox="0 0 22 22"><circle cx="11" cy="3" r="2" fill="#eee" stroke="#222"/><path fill="#a2841c" stroke="#3b2d00" d="M8 5h6v3l2 2v9l-3 2H9l-3-2v-9l2-2z"/><path fill="#e2c85a" d="M8 10h2v9H8z"/></svg>
    <i class="grip"></i>
    <svg class="tool" viewBox="0 0 22 22"><path fill="#555" stroke="#111" stroke-width="1.300" d="M2 7h4l2-3h7l2 3h3v11H2z"/><circle cx="11" cy="12" r="4.500" fill="#ddd" stroke="#111" stroke-width="1.500"/><circle cx="11" cy="12" r="2" fill="#333"/></svg>
    <i class="grip"></i>
    <svg class="tool" viewBox="0 0 22 22"><path fill="#20727c" stroke="#111" d="M2 14l5-4h14l-5 5z"/><path fill="#d6313a" stroke="#111" d="M2 14l14 1v5H3z"/><path fill="#232a60" stroke="#111" d="M16 15l5-5v5l-5 5z"/><path stroke="#f0d020" stroke-width="1.500" d="M11 1v11M7 5h8"/><path stroke="#d23" stroke-width="1.300" d="M2 4l9 8"/></svg>
    <svg class="tool" viewBox="0 0 22 22"><path fill="#2d9bc6" stroke="#111" stroke-width="1.300" d="M2 19c3-6 1-9 4-15l14-2c-3 6 0 10-2 17-4-5-8-6-16 0z"/><path fill="#7ddc6a" d="M7 13c0-7 6-8 10-8-2 4-1 7-2 10z"/><path fill="#f4f060" d="M9 12c1-4 4-5 6-5l-1 6z"/></svg>
    <svg class="tool" viewBox="0 0 22 22"><path fill="#ffe9a8" stroke="#222" d="M1 1h20v20H1z"/><circle cx="10" cy="10" r="7.500" fill="#eee" stroke="#333" stroke-width="1.300"/><circle cx="10" cy="9" r="4" fill="#fff" stroke="#333"/><circle cx="14" cy="14" r="5" fill="#bfc5dc" stroke="#223a7a" stroke-width="1.300"/><path stroke="#223" d="M10 3v12M3 10h13M15 15l5 5"/></svg>
    <svg class="tool" viewBox="0 0 22 22"><path fill="#2f8f83" stroke="#255" d="M3 4l14-3v4l-2 3 3 2v5l-2 5H4l2-5-3-3z"/><path fill="#f0b92a" d="M6 9l10-2 1 3-9 2z"/><path fill="#b22a2a" d="M6 13l10-2v3l-9 2z"/></svg>
    <i class="grip"></i>
    <svg class="tool" viewBox="0 0 22 22"><path fill="#e8a887" stroke="#a3542b" d="M3 9l9-7h6l-5 7 7-4v8l-7 7-2-1z"/><path fill="#ffe14a" stroke="#7a4a00" stroke-width="1.300" d="M3 9h3v5c1 3 4 3 5 0V9h3v6c-1 7-10 7-11 0z"/></svg>
    <i class="grip"></i>
    <svg class="tool" viewBox="0 0 22 22"><path fill="#e9c93a" stroke="#333" d="M3 14l6 6 12-5v3L9 22l-6-5z"/><path fill="#fff6b0" stroke="#333" stroke-width="1.200" d="M3 13l10-3 8 4-12 6z"/><path fill="#fff" stroke="#333" d="M3 3l6 7 2 6-8-4z"/><path stroke="#2b62c8" stroke-width="2.500" d="M11 14l8-10"/></svg><b class="drop"></b>
    <span class="more">»</span>
    <div class="brand">
      <svg viewBox="0 0 26 22"><g fill="none" stroke-width="2.300"><path stroke="#c5283c" d="M8 1h7c1 4-2 6-6 7"/><path stroke="#3c3c8c" d="M7 11c6-1 8 3 4 6-2 2-5 3-9 3l5-8"/><path stroke="#eb9a2c" d="M21 10c-6-1-8 3-4 5 4 2 2 6-4 5"/></g></svg>
      <span>CATIA</span>
    </div>
  </div>

  <!-- ===== Status bar ===== -->
  <footer class="status">
    <span>Select an object or a command</span>
    <div class="power"></div>
    <svg class="sbtn" viewBox="0 0 31 18"><path d="M10 6h6v6h-6M20 3v11h-9M17 11h3"/></svg>
    <svg class="sbtn" viewBox="0 0 31 18"><circle cx="14" cy="8" r="5"/><path d="M14 6v5M9 14h12V4M23 2v12"/></svg>
  </footer>
</div>

<!-- ===== Windows taskbar ===== -->
<div class="taskbar">
  <div class="apps">
    <span><svg viewBox="0 0 18 18"><path fill="#fff" d="M1 3.500l6.500-1v6H1zM8.500 2.300L17 1v7.500H8.500zM1 9.500h6.500v6L1 14.500zM8.500 9.500H17V17l-8.500-1.300z"/></svg></span>
    <span><svg viewBox="0 0 18 18"><path fill="none" stroke="#ddd" stroke-width="1.400" d="M2 1v3h9V1M2 17v-3h9v3M2 6.500h9v5H2zM15 1v16"/><path fill="#fff" d="M13.500 6h3v3h-3z"/></svg></span>
    <span class="open"><svg viewBox="0 0 18 18"><circle cx="9" cy="9" r="8" fill="url(#edge)"/><path fill="#59cf6d" d="M8 1.200c6-1 10 4 9 9-2 2-6 2-6 0 2-5-6-7-9-3 1-3 3-5 6-6z"/><path fill="#0c4d95" d="M7 9c-1 4 3 7 8 5-4 4-10 3-12-2 0-3 2-4 4-3z"/></svg></span>
    <span><svg viewBox="0 0 18 18"><path fill="#e8a33a" d="M1 2h6l2 2h8v13H1z"/><path fill="#ffd977" d="M1 6h16v10H1z"/><path fill="#3e8edb" d="M4 17v-6h10v6h-3v-3H7v3z"/></svg></span>
    <span><svg viewBox="0 0 18 18"><path fill="#fdd90a" d="M2 2h14v14H2z"/><path fill="#3a3214" d="M10 10h6l-6 6z"/></svg></span>
    <span class="open"><svg viewBox="0 0 18 18"><path fill="#05070f" stroke="#ddd" d="M1.500 1h15v16h-15z"/><use href="#catia" x="3" y="2" width="12" height="14"/></svg></span>
  </div>
  <div class="tray">
    <svg viewBox="0 0 16 16"><path d="M3 10.500l5-5 5 5"/></svg>
    <svg viewBox="0 0 16 16"><path d="M4 5h6v7H4zM10 7l3-1v5l-3-1M5 3c1-2 4-2 5 0M5 14c1 1.500 4 1.500 5 0"/></svg>
    <svg viewBox="0 0 16 16"><path fill="#fff" d="M5.500 1h5v9h-5z"/><path d="M4 9c0 5 8 5 8 0M8 13v3"/></svg>
    <svg viewBox="0 0 16 16"><path d="M5 5h10v7H5zM1 3v3l2 1 2-1V3M3 7v5h2"/><path fill="#fff" d="M7 7h6v3H7z"/></svg>
    <svg viewBox="0 0 16 16"><path d="M2 14C3 7 7 3 14 2M5 14c1-5 4-8 9-9M8 14c1-3 3-5 6-6M11 14c0-1 1-2 3-3"/></svg>
    <svg viewBox="0 0 16 16"><path d="M1 6h2l4-4v12L3 10H1zM9 5.500c1 1.500 1 3.500 0 5M11 4c2 2.500 2 5.500 0 8"/><path stroke="#777" d="M13 2.500c3 3 3 8 0 11"/></svg>
    <span class="lang">ENG</span>
    <span class="clock">10:27 AM</span>
    <svg class="note" viewBox="0 0 18 18"><path d="M1.500 2h15v11.500h-5L9 16l-2.500-2.500h-5z"/></svg>
  </div>
</div>
</body>
</html>
```
FILE: styles.css
```css
:root{
  --panel:#cfcee6;
  --bar:linear-gradient(180deg,#fff 0,#e9e8f6 9%,#cfcee6 30%,#cac9e1 62%,#a5a4b8 90%,#8e8d9e 100%);
  font-family:"Open Sans","Noto Sans",sans-serif;
}
*{box-sizing:border-box}
html,body{margin:0;padding:0}
body{width:1280px;height:720px;overflow:hidden;background:#000;color:#111}
svg{display:block;flex:none}
.defs{position:absolute}
.app{width:1278px;height:692px;margin-left:1px;display:flex;flex-direction:column;overflow:hidden}

/* ===== Title bar ===== */
.titlebar{height:22px;background:#fff;display:flex;align-items:center;padding:0 0 1px 3px}
.titlebar .logo{width:13px;height:13px}
.title{margin-left:6px;font-size:11.5px;letter-spacing:-.36px;color:#9a9a9a;white-space:nowrap}
.win-btns{margin-left:auto;display:flex;gap:30px;padding-right:15px}
.win-btns svg{width:12px;height:12px;fill:none;stroke:#8b8b8b;stroke-width:1}

/* ===== Menu ===== */
.menubar{height:18px;background:var(--panel);display:flex;align-items:center;font-size:11.5px;letter-spacing:-.3px}
.menubar .logo{width:17px;height:14px;margin:0 3px 0 1px}
.item{white-space:nowrap;padding:0 21.7px 1px 0;line-height:17px}
.item u{text-underline-offset:1px}
.item.start{background:#fde0b0;padding:0 14px 1px 6px;margin-right:6px}
.item.enovia{padding-right:13px}
.mdi{margin-left:auto;display:flex;gap:1px}
.mdi svg{width:17px;height:18px;background:#e6e6ee;fill:none;stroke:#7c8292}

/* ===== Toolbars ===== */
.toolbar{display:flex;align-items:center;background:var(--bar)}
.toolbar.top{height:34px;padding:2px 0 0 781px;border-bottom:1px solid #4c4c5a}
.toolbar.bottom{height:35px;padding:2px 0 0 4px;border-top:1px solid #fff;border-bottom:1px solid #77768a}
.grip{width:3px;height:18px;margin:-8px 7.5px 0;background:#eeeefa;border-right:1px solid #9f9eb4;border-bottom:1px solid #9f9eb4;flex:none}
.top .grip{margin:-10px 5px 0 0}
.bottom .grip:first-child{margin-left:0;margin-right:6px}
.tool{width:22px;height:22px;margin:0 2.15px;fill:none;overflow:visible;flex:none}
.tool.slim{width:17px}
.drop{position:relative;width:1.3px;flex:none}
.drop::after{content:"";position:absolute;right:-1px;top:8px;border:3.5px solid transparent;border-top:4px solid #111;border-bottom:0}
.drop.lit::after{box-shadow:0 0 0 1px #fff;background:#fff}
.ghost{fill:#dddde8;stroke:#a4a4b2;filter:drop-shadow(1px 1px 0 #fff)}
.fx{font:italic 19px "Liberation Serif",serif;fill:#111;stroke:none}
.more{margin-left:9px;color:#f3f3ff;font-size:15px;line-height:14px;margin-top:-20px;width:14px}
.brand{width:42px;margin-left:3px;display:flex;flex-direction:column}
.brand svg{width:26px;height:21px}
.brand span{padding-left:4px;font-size:10px;line-height:12px;font-weight:700;font-style:italic;letter-spacing:-.1px;color:#34347c}

/* ===== Work area ===== */
.work{flex:1;display:flex;min-height:0;border-top:2px solid #1d1d38;border-left:1px solid #44445c}
.viewport{
  position:relative;width:1243px;overflow:hidden;
  background:linear-gradient(180deg,#333364 0%,#3b3b6c 35%,#464678 66%,#62628b 77%,#8686a5 89%,#a9a9be 100%);
}
.scene{position:absolute;left:0;top:0;width:1243px;height:558px}
.part{stroke:#0d0d00;stroke-width:3.8;stroke-linejoin:round}
.part .a{fill:#6b6b04}
.part .d{fill:#484800}
.part .y{fill:#e7e70c;stroke-width:3}
.part .n{fill:none}
.part .hole{fill:#c4c418}
.wire{fill:none;stroke:#f4f4fa;stroke-width:1}
.compass-text{font:14px "Open Sans",sans-serif;fill:#dede4a}
.axis-text{font:12px "Open Sans",sans-serif;fill:#f0f0f6}

/* ===== Tree ===== */
.tree{position:absolute;left:8px;top:46px;margin:0;padding:0;list-style:none;color:#f4f4fa;font-size:18px}
.tree::before{content:"";position:absolute;left:10px;top:30px;width:2px;height:170px;background:#eee}
.tree li{position:relative;display:flex;align-items:center;height:36.7px;padding-left:28px}
.tree li::before{content:"";position:absolute;left:11px;top:17px;width:15px;height:2px;background:#eee}
.tree li.root{padding-left:0}
.tree li.root::before{display:none}
.tree .root svg{width:32px;height:32px;margin-top:-5px}
.tree .root span{margin-left:2px;background:none}
.tree .pl{width:28px;height:14px}
.tree span{margin-left:4px;padding:0 2px;line-height:26px;letter-spacing:-.3px;background:rgba(42,42,88,.35);white-space:nowrap}
.tree .node{padding-left:2px}
.tree .pm{width:17px;height:17px;position:relative}
.tree .bd{width:28px;height:28px;margin-left:9px;overflow:visible;position:relative}

/* ===== Floating toolbars ===== */
.float{position:absolute;background:#fff;box-shadow:1px 2px 5px rgba(20,20,50,.55)}
.float-title{display:flex;align-items:center;justify-content:space-between;padding:0 1px 3px 8px;font-size:11.5px;color:#8f8f8f;white-space:nowrap}
.float-title i{width:18px;height:18px;background:#dfdfdf;margin-top:3px}
.float-body{display:flex;align-items:center;background:var(--bar)}
.trans{left:867px;top:194px;width:140px;height:61px}
.trans .float-title{height:31px;letter-spacing:-.5px}
.trans .float-body{height:30px;padding-left:4px}
.trans .grip{height:16px;margin:-6px 5px 0 0}
.trans .sep{width:2px;height:30px;background:#f4f4fc;margin:0 3.5px}
.trans .tool.last{width:20px}
.trans .last + .drop{width:0}
.dress{left:1024px;top:302px;width:34px;height:229px}
.dress .float-title{height:29px}
.float-body.col{
  flex-direction:column;height:200px;
  background:linear-gradient(90deg,#fff 0,#d9d8ec 20%,#cfcee6 70%,#a9a8bd 100%);
}
.col .grip{width:16px;height:3px;margin:4px 0 5px -12px}
.col .tool{margin:2px 0;height:22.5px}
.col .drop{width:0;height:1px}
.col .drop::after{right:-15px;top:-3px}
.col .end + .drop::after{top:-6px}

/* ===== Right toolbar ===== */
.sidebar{
  flex:1;overflow:hidden;display:flex;flex-direction:column;padding:4px 0 0 8px;
  background:linear-gradient(90deg,#fff 0,#fff 4px,#d6d5ea 9px,#cfcee6 28px,#c9dfd0 30px,#c9dfd0 100%);
}
.sidebar .grip{width:16px;height:3px;margin:7px 0 7.8px -1px}
.sidebar .grip:first-child{margin-top:0;margin-bottom:3px}
.sidebar .tool{width:24px;height:22px;margin:2px 0}
.sidebar .wide{margin-bottom:6px}
.sidebar .note-t{margin-top:-1px}
.sidebar .lower{margin-top:3.5px}
.sidebar .stamp{margin-top:6px;margin-bottom:0}
.sidebar .stamp + .grip{margin-top:6px}
.abc{font:9.5px "Open Sans",sans-serif;letter-spacing:-.2px;fill:#116}

/* ===== Status bar ===== */
.status{height:23px;background:var(--panel);display:flex;align-items:center;font-size:11.5px;letter-spacing:-.4px;padding-left:3px}
.status span{padding-bottom:1px}
.power{margin-left:auto;width:280px;height:19px;background:#fff;border:1px solid #666;border-right-color:#ddd;border-bottom-color:#ddd}
.sbtn{width:31px;height:19px;border:1px solid #8d8ca2;border-top-color:#fff;border-left-color:#fff;fill:none;stroke:#8f8f9d;stroke-width:1.3}

/* ===== Taskbar ===== */
.taskbar{height:28px;background:#1b1b1b;display:flex;justify-content:space-between;color:#f2f2f2}
.apps{display:flex}
.apps span{width:35px;display:flex;align-items:center;justify-content:center;border-bottom:2px solid transparent}
.apps span.open{background:linear-gradient(#76b9ed,#76b9ed) 50% 100%/27px 2px no-repeat border-box}
.apps svg{width:17px;height:17px}
.tray{display:flex;align-items:center;padding-right:21px;font-size:12px;letter-spacing:-.5px}
.tray svg{width:16px;height:16px;margin-right:6.5px;fill:none;stroke:#f0f0f0;stroke-width:1.2}
.lang{margin-left:2px;margin-right:10px}
.clock{margin-right:15px;white-space:nowrap}
.tray .note{width:18px;height:18px;margin:0}
```
